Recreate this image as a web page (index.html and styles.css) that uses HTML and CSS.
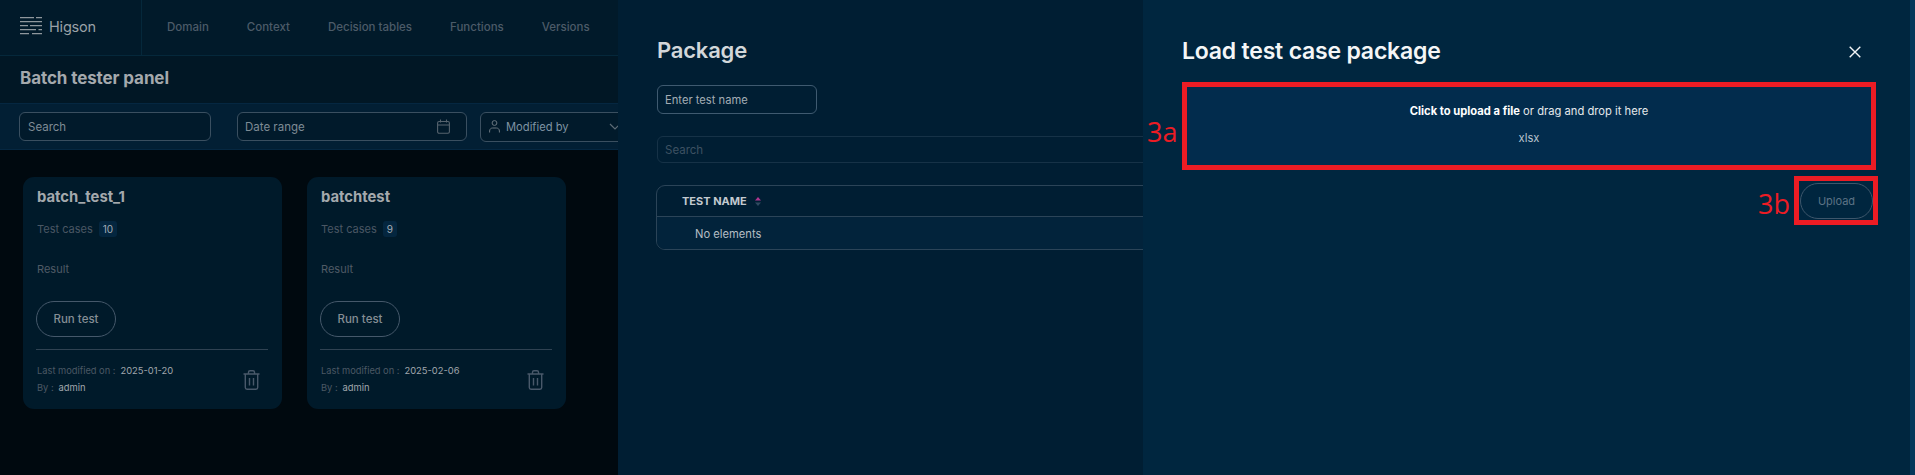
FILE: index.html
```html
<!DOCTYPE html>
<html lang="en">
<head>
<meta charset="utf-8">
<title>Higson</title>
<link rel="stylesheet" href="styles.css">
</head>
<body>
<div class="app">
  <main class="page">
    <header class="topbar">
      <div class="brand">
        <svg class="logo" width="22" height="19" viewBox="0 0 22 19" fill="none" stroke="#8f979d" stroke-width="1.3"><path d="M0 .7h14M16 .7h6M0 4.7h22M0 8.7h8M10 8.7h12M0 12.7h16M18.500 12.700h3.500M0 16.700h9M12 16.700h10"/></svg>
        <span class="brand-name">Higson</span>
      </div>
      <nav class="nav">
        <a class="nav-item">Domain</a>
        <a class="nav-item">Context</a>
        <a class="nav-item">Decision tables</a>
        <a class="nav-item">Functions</a>
        <a class="nav-item">Versions</a>
        <span class="nav-active"></span>
      </nav>
    </header>
    <div class="title-band"><h1 class="page-title">Batch tester panel</h1></div>
    <div class="filters">
      <div class="field field-search">Search</div>
      <div class="field field-date">Date range
        <svg class="cal" width="13" height="15" viewBox="0 0 13 15" fill="none" stroke="#56636e" stroke-width="1.100"><rect x=".6" y="2.500" width="11.800" height="11.800" rx="1.500"/><path d="M.6 6h11.800M3.500 .5v3M9.500 .5v3"/></svg>
      </div>
      <div class="field field-user">
        <svg width="11" height="13" viewBox="0 0 11 13" fill="none" stroke="#6a7780" stroke-width="1"><circle cx="5.500" cy="3" r="2.400"/><path d="M.6 12.500v-1.500c0-2 1.500-3 3-3h3.800c1.500 0 3 1 3 3v1.500"/></svg>
        <span class="user-label">Modified by</span>
        <svg class="chev" width="12" height="7" viewBox="0 0 12 7" fill="none" stroke="#5d6b76" stroke-width="1.200"><path d="M1 1l5 5 5-5"/></svg>
      </div>
    </div>
    <section class="cards">
      <article class="card">
        <h2 class="card-title">batch_test_1</h2>
        <div class="card-row"><span class="muted">Test cases</span><span class="badge">10</span></div>
        <div class="card-result muted">Result</div>
        <button class="btn-run">Run test</button>
        <hr class="rule">
        <div class="card-foot">
          <div class="meta">
            <div><span class="meta-key">Last modified on :</span><span class="meta-val">2025-01-20</span></div>
            <div><span class="meta-key">By :</span><span class="meta-val">admin</span></div>
          </div>
          <svg class="trash" width="17" height="20" viewBox="0 0 17 20" fill="none" stroke="#49596a" stroke-width="1.400"><path d="M.5 4h16M5.500 4V2.200C5.500 1.300 6.200.8 7 .8h3c.8 0 1.500.5 1.500 1.400V4M2.300 4v13.500c0 1 .7 1.700 1.700 1.700h9c1 0 1.700-.7 1.700-1.700V4M6.500 8v7.500M10.500 8v7.500"/></svg>
        </div>
      </article>
      <article class="card">
        <h2 class="card-title">batchtest</h2>
        <div class="card-row"><span class="muted">Test cases</span><span class="badge">9</span></div>
        <div class="card-result muted">Result</div>
        <button class="btn-run">Run test</button>
        <hr class="rule">
        <div class="card-foot">
          <div class="meta">
            <div><span class="meta-key">Last modified on :</span><span class="meta-val">2025-02-06</span></div>
            <div><span class="meta-key">By :</span><span class="meta-val">admin</span></div>
          </div>
          <svg class="trash" width="17" height="20" viewBox="0 0 17 20" fill="none" stroke="#49596a" stroke-width="1.400"><path d="M.5 4h16M5.500 4V2.200C5.500 1.300 6.200.8 7 .8h3c.8 0 1.500.5 1.500 1.400V4M2.300 4v13.500c0 1 .7 1.700 1.700 1.700h9c1 0 1.700-.7 1.700-1.700V4M6.500 8v7.500M10.500 8v7.500"/></svg>
        </div>
      </article>
    </section>
  </main>

  <aside class="panel-package">
    <h2 class="panel-title">Package</h2>
    <div class="name-input">Enter test name</div>
    <div class="table-search">Search</div>
    <div class="table">
      <div class="table-head">TEST NAME
        <svg class="sort" width="6" height="9" viewBox="0 0 6 9"><path d="M3 0l3 3.500H0z" fill="#b0368f"/><path d="M3 9L0 5.500h6z" fill="#2f4a60"/></svg>
      </div>
      <div class="table-row">No elements</div>
    </div>
  </aside>

  <aside class="panel-load">
    <div class="load-head">
      <h2 class="load-title">Load test case package</h2>
      <svg class="close" width="12" height="12" viewBox="0 0 12 12" stroke="#f2f5f7" stroke-width="1.400"><path d="M.7.700l10.600 10.600M11.300.700L.7 11.300"/></svg>
    </div>
    <div class="dropzone">
      <p class="drop-main"><strong>Click to upload a file</strong> or drag and drop it here</p>
      <p class="drop-ext">xlsx</p>
    </div>
    <div class="upload-row">
      <div class="upload-box"><button class="btn-upload">Upload</button></div>
    </div>
    <span class="note note-a">3a</span>
    <span class="note note-b">3b</span>
    <div class="scrollbar"></div>
  </aside>
</div>
</body>
</html>
```
FILE: styles.css
```css
* { box-sizing: border-box; }
html, body { margin: 0; height: 100%; overflow: hidden; }
body { font-family: Inter, "Liberation Sans", sans-serif; background: #00090f; }
h1, h2, p { margin: 0; }

.app { display: flex; width: 1915px; height: 475px; overflow: hidden; }

/* dimmed page */
.page { flex: 0 0 618px; height: 475px; overflow: hidden; background: #00090f; display: flex; flex-direction: column; }
.topbar { flex: 0 0 56px; display: flex; background: #011a2a; border-bottom: 1px solid #05283b; }
.brand { flex: 0 0 142px; display: flex; align-items: center; padding: 0 0 2px 20px; gap: 7px; border-right: 1px solid #05283b; }
.brand-name { color: #9aa1a7; font-size: 14.500px; letter-spacing: -.2px; }
.nav { display: flex; align-items: center; gap: 38px; padding-left: 25px; padding-bottom: 2px; flex: 1; white-space: nowrap; }
.nav-item { color: #4c5b68; font-size: 11.500px; font-weight: 500; }
.nav-active { flex: 0 0 60px; height: 35px; margin-left: 33px; background: #04263d; border-radius: 7px; }

.title-band { flex: 0 0 47px; background: #011725; display: flex; align-items: center; padding: 0 0 4px 20px; }
.page-title { color: #a4a9ad; font-size: 17px; font-weight: 700; letter-spacing: -.1px; }

.filters { flex: 0 0 47px; border-top: 1px solid #052741; border-bottom: 1px solid #052741; display: flex; align-items: center; padding: 0 0 0 19px; background: #021f34; }
.field { height: 29px; border: 1px solid #3a4f60; border-radius: 6px; color: #7e8b95; font-size: 11.500px; display: flex; align-items: center; background: #011a2b; flex: none; }
.field-search { width: 192px; padding-left: 8px; margin-right: 26px; }
.field-date { width: 230px; padding-left: 7px; justify-content: space-between; padding-right: 16px; margin-right: 13px; }
.field-user { width: 200px; height: 30px; padding-left: 8px; }
.user-label { margin-left: 6px; color: #7f93a3; font-size: 11.200px; }
.chev { margin-left: 40px; }

.cards { flex: 1; display: flex; gap: 25px; padding: 27px 0 0 23px; }
.card { flex: 0 0 259px; height: 232px; background: #001a2a; border-radius: 11px; padding: 10px 14px 0; }
.card-title { color: #a4a9ad; font-size: 14.800px; font-weight: 700; line-height: 20px; }
.card-row { display: flex; align-items: center; gap: 6px; height: 16px; margin-top: 14px; }
.muted { color: #4a5764; font-size: 11px; }
.badge { background: #04263f; color: #a2adb6; font-size: 10px; border-radius: 3px; height: 16px; padding: 0 4px; display: flex; align-items: center; }
.card-result { height: 16px; line-height: 16px; margin-top: 24px; color: #505b66; }
.btn-run { display: block; width: 80px; height: 36px; margin: 24px 0 0 -1px; padding: 0; background: transparent; border: 1px solid #45586a; border-radius: 18px; color: #858e95; font: 500 11.500px Inter, sans-serif; }
.rule { height: 1px; border: 0; margin: 12px 0 0 -1px; background: #2f4252; }
.card-foot { display: flex; align-items: center; justify-content: space-between; margin-top: 12px; padding-right: 8px; }
.meta { font-size: 9.300px; line-height: 17px; }
.meta-key { color: #4b5864; margin-right: 5px; }
.meta-val { color: #a0a7ad; font-size: 9.400px; }
.trash { display: block; margin-top: 2px; }

/* package panel */
.panel-package { flex: 0 0 525px; height: 475px; overflow: hidden; background: #001e33; padding: 36px 0 0 39px; }
.panel-title { color: #d2d7da; font-size: 22px; font-weight: 600; line-height: 28px; letter-spacing: -.2px; }
.name-input { width: 160px; height: 29px; margin-top: 21px; border: 1px solid #3f5a70; border-radius: 6px; padding-left: 7px; color: #a3adb4; font-size: 11.200px; display: flex; align-items: center; }
.table-search { width: 600px; height: 27px; margin-top: 22px; border: 1px solid #163247; border-radius: 6px; padding-left: 7px; color: #3d5162; font-size: 11.500px; display: flex; align-items: center; }
.table { width: 600px; height: 65px; margin: 22px 0 0 -1px; border: 1px solid #2b4458; border-radius: 9px; overflow: hidden; }
.table-head { height: 31px; border-bottom: 1px solid #2b4458; padding-left: 25px; display: flex; align-items: center; gap: 8px; color: #c3cad0; font-size: 11px; font-weight: 700; }
.table-row { height: 33px; background: #02233b; padding-left: 38px; display: flex; align-items: center; color: #b4bdc4; font-size: 11.200px; }

/* load panel */
.panel-load { position: relative; flex: 0 0 772px; height: 475px; background: #00263f; padding: 37px 39px 0 39px; }
.load-head { display: flex; align-items: center; justify-content: space-between; height: 28px; padding-right: 15px; }
.load-title { color: #f4f6f7; font-size: 23px; font-weight: 600; line-height: 28px; letter-spacing: -.2px; }
.close { margin-top: 2px; }
.dropzone { height: 88px; margin-top: 17px; border: 5px solid #ed1c24; background: #022c4d; display: flex; flex-direction: column; align-items: center; color: #e4e8eb; font-size: 11.200px; padding-top: 17px; }
.drop-main { line-height: 14px; }
.drop-main strong { color: #fff; font-weight: 700; }
.drop-ext { line-height: 14px; margin-top: 13px; color: #b9c4cd; }
.upload-row { display: flex; justify-content: flex-end; margin: 6px -2px 0 0; }
.upload-box { width: 84px; height: 49px; border: 5px solid #ed1c24; display: flex; align-items: center; justify-content: flex-end; }
.btn-upload { width: 73px; height: 36px; padding: 0; background: transparent; border: 1px solid #3d566b; border-radius: 18px; color: #5d7385; font: 400 11px Inter, sans-serif; }
.note { position: absolute; color: #ed1c24; font-family: "Open Sans", sans-serif; font-size: 27px; line-height: 30px; }
.note-a { left: 4px; top: 117px; }
.note-b { left: 615px; top: 189px; }
.scrollbar { position: absolute; top: 0; right: 0; width: 5px; height: 100%; background: #04375a; }
```
